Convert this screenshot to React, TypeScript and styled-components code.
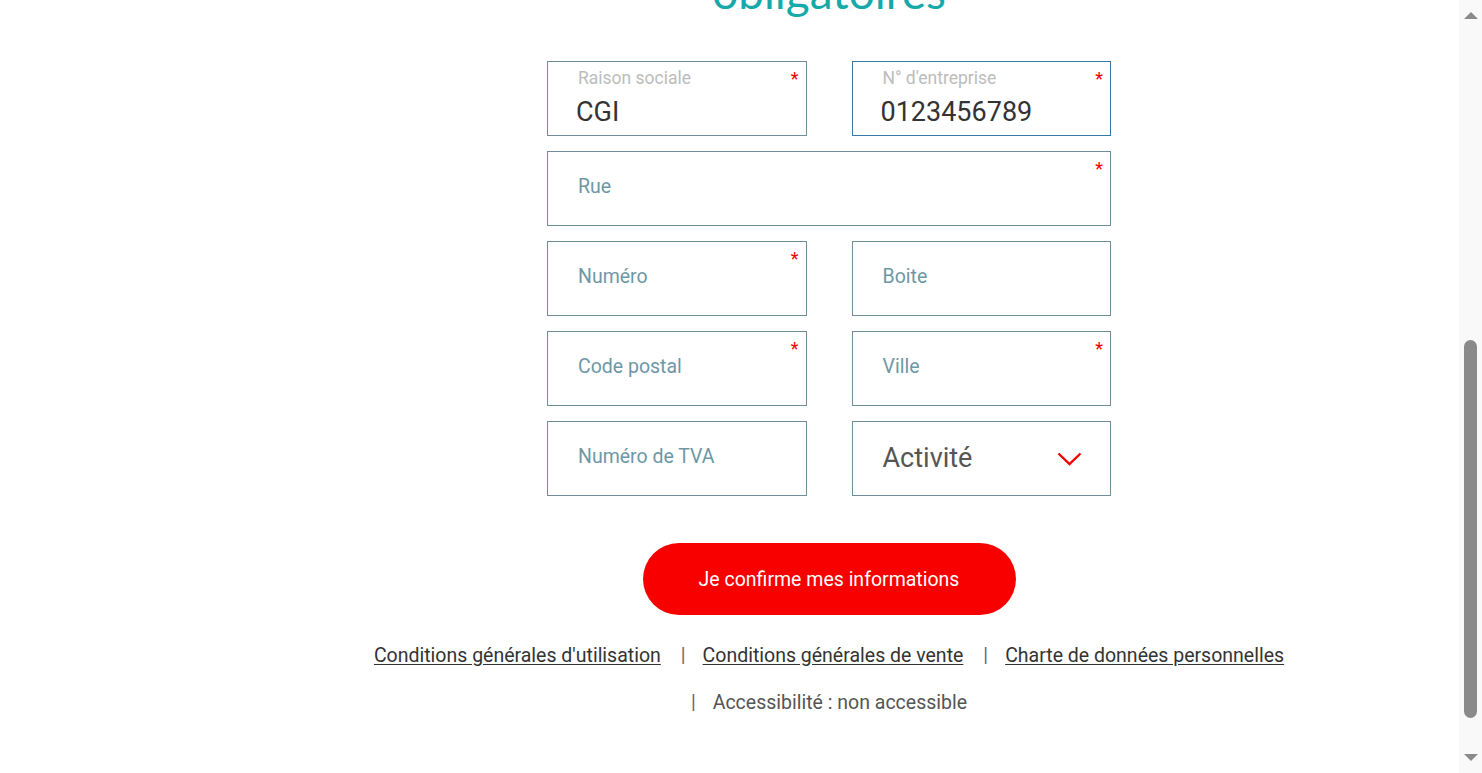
import * as React from "react";
import styled, { createGlobalStyle } from "styled-components";

const GlobalStyle = createGlobalStyle`
    html {
        overflow-y: scroll;
    }
    body {
        margin: 0;
        background: #ffffff;
        font-family: Roboto, "Liberation Sans", Arial, sans-serif;
    }
    * {
        box-sizing: border-box;
    }
`;

const Page = styled.div`
    padding: 0 16px 58px 192px;
    display: flex;
    flex-direction: column;
    align-items: center;
`;

const Intro = styled.section`
    padding-top: 560px;
    display: flex;
    flex-direction: column;
    align-items: center;
`;

const Title = styled.h1`
    margin: 0 0 43px;
    font-family: Lato, "Open Sans", sans-serif;
    font-weight: 400;
    font-size: 46px;
    line-height: 52px;
    color: #16a9a9;
    text-align: center;
`;

const FormGrid = styled.form`
    width: 564px;
    display: grid;
    grid-template-columns: 1fr 1fr;
    column-gap: 45px;
    row-gap: 15px;
`;

const FieldBox = styled.div<{ $focused?: boolean; $wide?: boolean; $filled?: boolean }>`
    position: relative;
    height: 75px;
    grid-column: ${(p) => (p.$wide ? "1 / span 2" : "auto")};
    border: 1px solid ${(p) => (p.$focused ? "#3479a8" : "#6f8e9c")};
    padding: ${(p) => (p.$filled ? "5px 30px 0" : "0 30px")};
    display: flex;
    flex-direction: column;
    justify-content: ${(p) => (p.$filled ? "flex-start" : "center")};
`;

const SmallLabel = styled.span`
    font-size: 17.5px;
    line-height: 20px;
    color: #bcbcbc;
    margin-top: 1px;
`;

const Value = styled.span`
    font-size: 27px;
    line-height: 32px;
    color: #333333;
    margin-top: 8px;
    margin-left: -2px;
`;

const Placeholder = styled.span`
    font-size: 19.5px;
    line-height: 22px;
    color: #6e97a5;
    margin-top: -3px;
`;

const Required = styled.span`
    position: absolute;
    top: 8px;
    right: 7px;
    font-size: 18px;
    line-height: 18px;
    color: #f20000;
`;

const SelectBox = styled.div`
    height: 75px;
    border: 1px solid #6f8e9c;
    padding: 0 28px 0 30px;
    display: flex;
    align-items: center;
    justify-content: space-between;
`;

const SelectText = styled.span`
    font-size: 27px;
    color: #555555;
    margin-top: -1px;
`;

const Chevron = styled.svg`
    margin-top: 1px;
`;

const ConfirmButton = styled.button`
    margin-top: 47px;
    width: 373px;
    height: 72px;
    border: none;
    border-radius: 36px;
    background: #f80000;
    color: #ffffff;
    font-family: Roboto, "Liberation Sans", sans-serif;
    font-size: 19.5px;
    cursor: pointer;
`;

const Footer = styled.nav`
    margin-top: 29px;
    width: 1000px;
    display: flex;
    flex-wrap: wrap;
    justify-content: center;
    column-gap: 20px;
    row-gap: 23px;
    font-size: 19.5px;
    line-height: 24px;
`;

const FooterItem = styled.span`
    display: inline-flex;
    align-items: center;
`;

const Separator = styled.span`
    color: #666666;
    padding-right: 17px;
`;

const FooterLink = styled.a<{ $plain?: boolean }>`
    color: ${(p) => (p.$plain ? "#555555" : "#333333")};
    text-decoration: ${(p) => (p.$plain ? "none" : "underline")};
    text-underline-offset: 2px;
`;

/* drawing of the browser's classic scrollbar seen in the screenshot */
const ScrollTrack = styled.div`
    position: fixed;
    top: 0;
    right: 0;
    width: 23px;
    height: 100vh;
    background: #f9f9f9;
`;

const ScrollArrow = styled.div<{ $down?: boolean }>`
    position: absolute;
    left: 5px;
    ${(p) => (p.$down ? "bottom: 12px;" : "top: 12px;")}
    width: 0;
    height: 0;
    border-left: 7px solid transparent;
    border-right: 7px solid transparent;
    ${(p) => (p.$down ? "border-top: 7px solid #8a8a8a;" : "border-bottom: 7px solid #8a8a8a;")}
`;

const ScrollThumb = styled.div`
    position: absolute;
    left: 5px;
    top: 340px;
    width: 13px;
    height: 378px;
    border-radius: 7px;
    background: #8a8a8a;
`;

type FieldProps = {
    label: string;
    value?: string;
    required?: boolean;
    focused?: boolean;
    wide?: boolean;
};

const Field = ({ label, value, required, focused, wide }: FieldProps) => (
    <FieldBox $focused={focused} $wide={wide} $filled={!!value}>
        {value ? (
            <>
                <SmallLabel>{label}</SmallLabel>
                <Value>{value}</Value>
            </>
        ) : (
            <Placeholder>{label}</Placeholder>
        )}
        {required && <Required>*</Required>}
    </FieldBox>
);

const footerLinks = [
    "Conditions générales d'utilisation",
    "Conditions générales de vente",
    "Charte de données personnelles",
];

export default function App() {
    React.useLayoutEffect(() => {
        window.scrollTo(0, document.documentElement.scrollHeight);
    }, []);

    return (
        <>
            <GlobalStyle />
            <Page>
                <Intro>
                    <Title>
                        Informations
                        <br />
                        obligatoires
                    </Title>
                </Intro>
                <FormGrid>
                    <Field label="Raison sociale" value="CGI" required />
                    <Field label="N° d'entreprise" value="0123456789" required focused />
                    <Field label="Rue" required wide />
                    <Field label="Numéro" required />
                    <Field label="Boite" />
                    <Field label="Code postal" required />
                    <Field label="Ville" required />
                    <Field label="Numéro de TVA" />
                    <SelectBox>
                        <SelectText>Activité</SelectText>
                        <Chevron width="25" height="14" viewBox="0 0 25 14" fill="none">
                            <path d="M1.5 1.5 L12.5 12 L23.5 1.5" stroke="#f40000" strokeWidth="2.4" />
                        </Chevron>
                    </SelectBox>
                </FormGrid>
                <ConfirmButton type="button">Je confirme mes informations</ConfirmButton>
                <Footer>
                    {footerLinks.map((text, i) => (
                        <FooterItem key={text}>
                            {i > 0 && <Separator>|</Separator>}
                            <FooterLink href="#">{text}</FooterLink>
                        </FooterItem>
                    ))}
                    <FooterItem>
                        <Separator>|</Separator>
                        <FooterLink $plain>Accessibilité : non accessible</FooterLink>
                    </FooterItem>
                </Footer>
            </Page>
            <ScrollTrack>
                <ScrollArrow />
                <ScrollThumb />
                <ScrollArrow $down />
            </ScrollTrack>
        </>
    );
}
